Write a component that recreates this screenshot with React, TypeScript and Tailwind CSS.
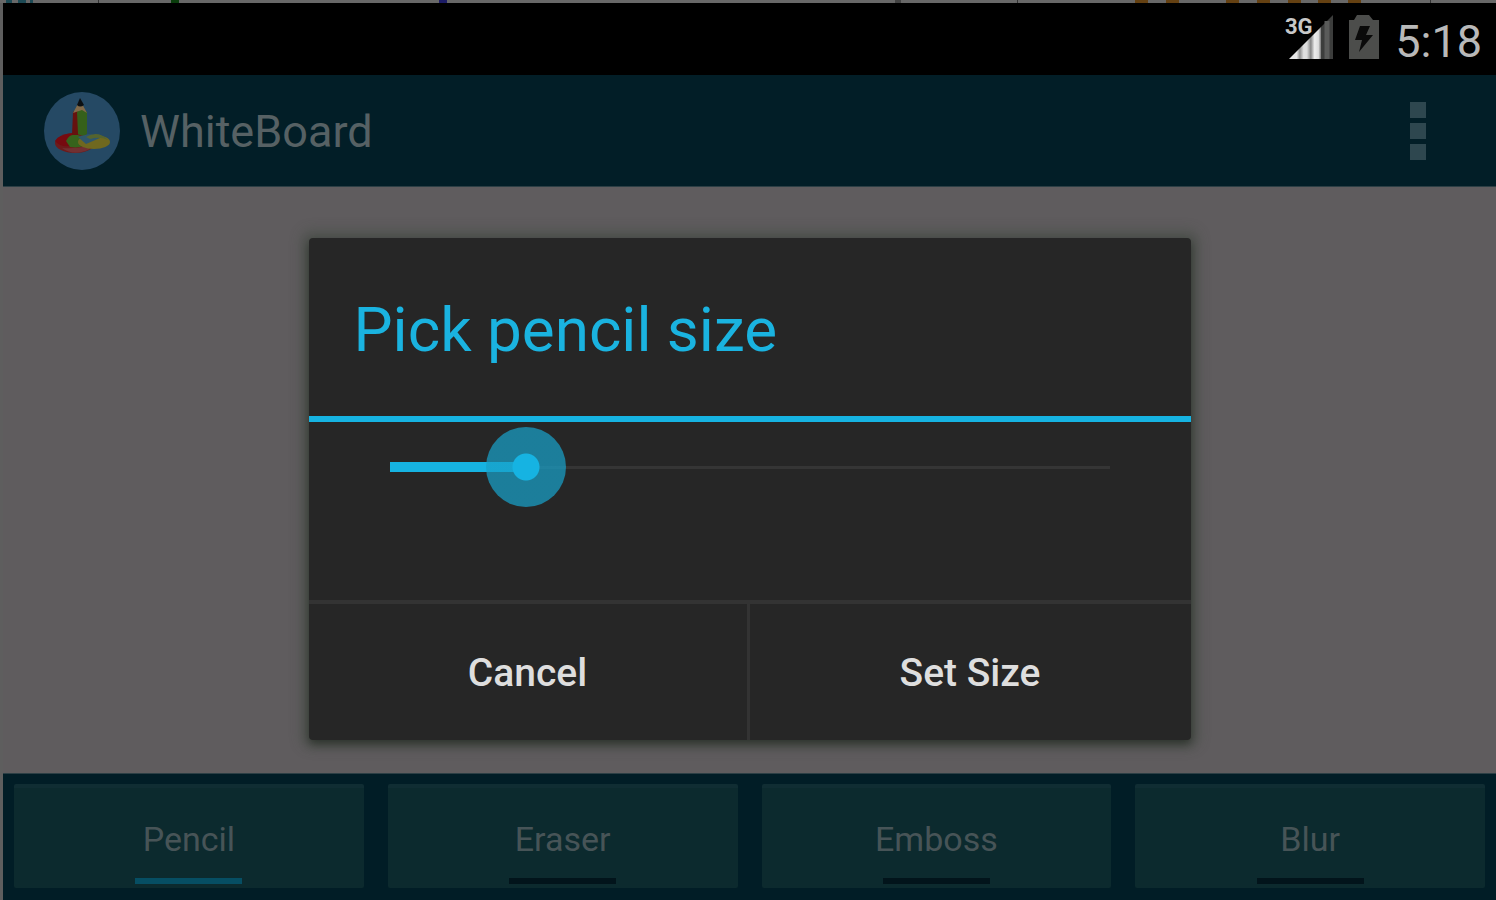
import { useState } from "react";
import { clsx } from "clsx";

const tools = ["Pencil", "Eraser", "Emboss", "Blur"];

// bits of the desktop toolbar that peek out above the emulator window
const toolbarBits = [
  { x: 6, width: 6, fill: "#1d4a55" },
  { x: 18, width: 8, fill: "#1d4a55" },
  { x: 30, width: 3, fill: "#1d4a55" },
  { x: 98, width: 1, fill: "#333333" },
  { x: 171, width: 8, fill: "#0a3d0c" },
  { x: 439, width: 8, fill: "#1c1c66" },
  { x: 895, width: 6, fill: "#444444" },
  { x: 1017, width: 1, fill: "#333333" },
  { x: 1135, width: 13, fill: "#654112" },
  { x: 1166, width: 13, fill: "#654112" },
  { x: 1226, width: 13, fill: "#654112" },
  { x: 1257, width: 13, fill: "#654112" },
  { x: 1288, width: 13, fill: "#654112" },
  { x: 1318, width: 13, fill: "#654112" },
  { x: 1348, width: 13, fill: "#654112" },
  { x: 1430, width: 1, fill: "#333333" },
];

function SignalIcon() {
  return (
    <svg width="48" height="46" viewBox="0 0 48 46" aria-label="3G signal">
      <defs>
        <linearGradient id="bars" x1="0" x2="1">
          <stop offset="0" stopColor="#e4e4e4" />
          <stop offset="0.24" stopColor="#e8e8e8" />
          <stop offset="0.34" stopColor="#8e8e8e" />
          <stop offset="0.46" stopColor="#e0e0e0" />
          <stop offset="0.56" stopColor="#dcdcdc" />
          <stop offset="0.68" stopColor="#858585" />
          <stop offset="0.8" stopColor="#ededed" />
          <stop offset="0.92" stopColor="#dcdcdc" />
          <stop offset="1" stopColor="#777777" />
        </linearGradient>
      </defs>
      <path d="M4 45 L36 13 V45 Z" fill="url(#bars)" />
      <path d="M36 13 L48 1 V45 H36 Z" fill="#3c3d3c" />
      <path d="M42 7 V45" stroke="#5a5b5a" strokeWidth="5" />
      <text
        x="0"
        y="20"
        fill="#c8c8c8"
        stroke="#000000"
        strokeWidth="3"
        paintOrder="stroke"
        fontSize="22"
        fontWeight="700"
        fontFamily="Roboto, sans-serif"
      >
        3G
      </text>
    </svg>
  );
}

function BatteryIcon() {
  return (
    <svg width="30" height="44" viewBox="0 0 30 44" aria-label="Charging">
      <path d="M0 5 H5 L8 0 H20 L24 5 H30 V44 H0 Z" fill="#4c4d4b" />
      <path d="M11 11 H21 L17 20 H24 L10 37 L13 25 H6 Z" fill="#0a0a0a" />
    </svg>
  );
}

function AppLogo() {
  return (
    <svg width="76" height="80" viewBox="0 0 76 80" aria-hidden="true">
      <ellipse cx="38" cy="40" rx="38" ry="39" fill="#254964" />
      <ellipse cx="31" cy="52" rx="20" ry="10" fill="#6e1a1b" />
      <path d="M11 50 Q14 44 28 42 L30 54 Q18 58 11 50 Z" fill="#760a10" />
      <path d="M18 57 Q30 66 46 58 L44 55 Q30 58 18 57 Z" fill="#713032" />
      <path d="M22 50 Q26 42 34 44 L46 50 Q40 58 26 56 Z" fill="#36631c" />
      <ellipse cx="50" cy="51" rx="16" ry="7" fill="#6f681f" />
      <path d="M34 46 Q46 40 56 47 L42 53 Z" fill="#2f566b" />
      <path d="M42 46 Q54 39 64 49 Q56 45 46 48 Z" fill="#55642f" />
      <path d="M29 21 L34 17 V44 H28 Z" fill="#66120f" />
      <path d="M33 21 L38 17 L43 21 V43 Q38 46 34 43 Z" fill="#35601a" />
      <path d="M29 22 L36 9 L43 22 L38 19 Z" fill="#816a4a" />
      <path d="M33 14 L36 7 L40 14 Q36 17 33 14 Z" fill="#0c1013" />
    </svg>
  );
}

function StatusBar() {
  return (
    <div className="flex h-[72px] items-center justify-end bg-black pt-1 pr-[14px] text-[#b9b9b9]">
      <div className="mr-4 mb-2 flex items-center gap-4">
        <SignalIcon />
        <BatteryIcon />
      </div>
      <time className="text-[45px] leading-none">5:18</time>
    </div>
  );
}

function ActionBar() {
  return (
    <header className="flex h-[112px] items-center justify-between border-b border-[#2c3f45] bg-[#021e27] pr-[62px] pl-[41px]">
      <div className="flex items-center gap-5">
        <AppLogo />
        <h1 className="pt-[2px] text-[45px] leading-none text-[#566164]">
          WhiteBoard
        </h1>
      </div>
      <button
        type="button"
        aria-label="More options"
        className="flex flex-col gap-[5px] p-2"
      >
        <span className="size-4 bg-[#2e474f]" />
        <span className="size-4 bg-[#2e474f]" />
        <span className="size-4 bg-[#2e474f]" />
      </button>
    </header>
  );
}

function SizeSlider() {
  const [size, setSize] = useState(19);

  return (
    <div className="relative mx-[41px] h-[90px]">
      <div className="absolute inset-x-10 top-0 flex h-full items-center">
        <div className="h-[3px] w-full bg-[#353535]" />
      </div>
      <div className="absolute inset-x-10 top-0 flex h-full items-center">
        <div className="h-[10px] bg-[#16b3e2]" style={{ width: `${size}%` }} />
      </div>
      <input
        type="range"
        min={0}
        max={100}
        value={size}
        aria-label="Pencil size"
        onChange={(e) => setSize(Number(e.target.value))}
        className="relative block h-full w-full cursor-pointer appearance-none bg-transparent outline-none [&::-webkit-slider-thumb]:size-20 [&::-webkit-slider-thumb]:appearance-none [&::-webkit-slider-thumb]:rounded-full [&::-webkit-slider-thumb]:bg-[radial-gradient(circle,#16b3e2_13px,#18a0c8b8_14px)]"
      />
    </div>
  );
}

function SizeDialog() {
  return (
    <section
      role="dialog"
      aria-labelledby="dialog-title"
      className="flex w-full max-w-[882px] flex-col rounded-sm bg-[#262626] shadow-[0_4px_10px_0_rgba(20,28,20,0.6),0_0_12px_8px_rgba(60,72,60,0.4)]"
    >
      <h2
        id="dialog-title"
        className="border-b-6 border-[#16b3e2] px-[45px] pt-14 pb-[50px] text-[62px] leading-[72px] text-[#1ab3e0]"
      >
        Pick pencil size
      </h2>
      <div className="pb-[88px]">
        <SizeSlider />
      </div>
      <div className="grid grid-cols-2 border-t-4 border-[#333333] text-[39px] font-medium text-[#dedede]">
        <button
          type="button"
          className="h-[136px] border-r-3 border-[#333333] pt-[2px]"
        >
          Cancel
        </button>
        <button type="button" className="h-[136px] pt-[2px]">
          Set Size
        </button>
      </div>
    </section>
  );
}

function ToolBar() {
  const [active, setActive] = useState("Pencil");

  return (
    <nav className="grid grid-cols-4 gap-6 border-t border-[#2c3f45] bg-[#011d26] px-[11px] pt-[10px] pb-3">
      {tools.map((tool) => (
        <button
          key={tool}
          type="button"
          aria-pressed={active === tool}
          onClick={() => setActive(tool)}
          className="flex h-[104px] flex-col items-center justify-end gap-[15px] rounded-xs border-t-4 border-[#102d33] bg-[#0c2a2e] pb-1 text-[34px] leading-[48px] text-[#475457]"
        >
          {tool}
          <span
            className={clsx(
              "h-[6px] w-[107px]",
              active === tool ? "bg-[#064e63]" : "bg-[#02141b]"
            )}
          />
        </button>
      ))}
    </nav>
  );
}

export default function App() {
  return (
    <div className="flex min-h-screen flex-col bg-[#5e5e5e] pl-[3px] font-[Roboto,sans-serif]">
      <div className="-ml-[3px] h-[3px] overflow-hidden bg-[#686868]">
        <svg width="1496" height="3" aria-hidden="true">
          {toolbarBits.map((bit) => (
            <rect key={bit.x} x={bit.x} width={bit.width} height="3" fill={bit.fill} />
          ))}
        </svg>
      </div>
      <StatusBar />
      <ActionBar />
      <main className="flex flex-1 items-start justify-center bg-[#5f5c5e] pt-[51px] pb-8">
        <SizeDialog />
      </main>
      <ToolBar />
    </div>
  );
}
